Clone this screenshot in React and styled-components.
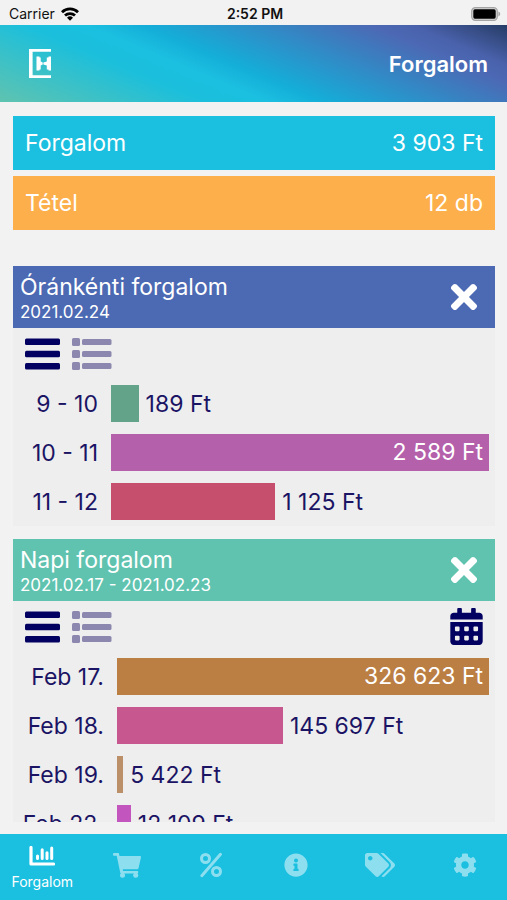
import React from 'react';
import styled, {createGlobalStyle} from 'styled-components';
import {FaTimes, FaCalendarAlt, FaInfoCircle, FaTags, FaCog} from 'react-icons/fa';

const hourly = [
  {label: '9 - 10', value: 189, color: '#62a389'},
  {label: '10 - 11', value: 2589, color: '#b560aa'},
  {label: '11 - 12', value: 1125, color: '#c64f6d'}
];

const daily = [
  {label: 'Feb 17.', value: 326623, color: '#bb7e43'},
  {label: 'Feb 18.', value: 145697, color: '#c6578f'},
  {label: 'Feb 19.', value: 5422, color: '#bb9069'},
  {label: 'Feb 22.', value: 12109, color: '#c255be'}
];

const formatFt = (value) => {
  return String(value).replace(/\B(?=(\d{3})+$)/g, ' ') + ' Ft';
}

const WifiIcon = () => (
  <svg width="18" height="14" viewBox="0 0 18 14" fill="none" stroke="#000" strokeWidth="2.8">
    <path d="M1 5.2a11.4 11.4 0 0 1 16 0" />
    <path d="M4 8.6a7.2 7.2 0 0 1 10 0" />
    <path d="M9 13.8 6 10.8a4.3 4.3 0 0 1 6 0z" fill="#000" stroke="none" />
  </svg>
);

const BatteryIcon = () => (
  <svg width="30" height="14" viewBox="0 0 30 14">
    <rect x="0.7" y="0.7" width="25.6" height="12.6" rx="3.6" fill="#d4d4d4" stroke="#a4a4a4" strokeWidth="1.2" />
    <rect x="2.3" y="2.3" width="22.4" height="9.4" rx="1.6" fill="#000" />
    <path d="M27.4 4.6c2.4.7 2.4 4.1 0 4.8z" fill="#a4a4a4" />
  </svg>
);

const LogoIcon = () => (
  <svg width="22" height="29" viewBox="0 0 22 29" fill="#fff">
    <path d="M0 0h22v2.800H3.600v23.400H22V29H0z" />
    <path d="M7.500 7.500h3v1h1.200v4l2 .9v2.200l-2 .9v4h-1.200v1h-3z" />
    <path d="M22 7.500h-2.500v1H17.800v4l-3.400 1v2l3.400 1v4h1.700v1H22z" />
  </svg>
);

const LinesIcon = () => (
  <svg width="35" height="32" viewBox="0 0 35 32" fill="currentColor">
    <rect y="0.500" width="35" height="6.500" rx="1.500" />
    <rect y="12.700" width="35" height="6.500" rx="1.500" />
    <rect y="25" width="35" height="6.500" rx="1.500" />
  </svg>
);

const ListIcon = () => (
  <svg width="40" height="32" viewBox="0 0 40 32" fill="currentColor">
    <rect width="8" height="8" rx="1.500" />
    <rect y="12" width="8" height="8" rx="1.500" />
    <rect y="24" width="8" height="8" rx="1.500" />
    <rect x="10" y="1" width="29.500" height="6" rx="1.500" />
    <rect x="10" y="13" width="29.500" height="6" rx="1.500" />
    <rect x="10" y="25" width="29.500" height="6" rx="1.500" />
  </svg>
);

const ChartIcon = () => (
  <svg width="26" height="20" viewBox="0 0 26 20" fill="none" stroke="currentColor" strokeLinecap="round">
    <path d="M2 1.500V18H24.500" strokeWidth="3.200" strokeLinejoin="round" />
    <path d="M8.500 10V12.500M13.200 3.800V12.500M18 6.800V12.500M22.700 2V12.500" strokeWidth="3" />
  </svg>
);

const CartIcon = () => (
  <svg width="28" height="25" viewBox="0 0 28 25" fill="currentColor">
    <path d="M1.200 0h4.600l.7 3H27c.8 0 1.200.5 1 1.200l-2.500 11c-.2.700-.6 1-1.200 1H9.700l.4 1.700h14c.8 0 1.300.6 1.100 1.300l-.3 1.200H8.300c-.6 0-1-.4-1.100-1L3.700 2.700H1.200C.3 2.700 0 2.200 0 1.400S.4 0 1.200 0z" />
    <circle cx="9.500" cy="22.300" r="2.500" />
    <circle cx="22.700" cy="22.300" r="2.500" />
  </svg>
);

const PercentIcon = () => (
  <svg width="24" height="26" viewBox="0 0 24 26" fill="none" stroke="currentColor">
    <circle cx="6.500" cy="6.500" r="4" strokeWidth="3" />
    <circle cx="17.500" cy="19.500" r="4" strokeWidth="3" />
    <path d="M21.500 2.300 2.800 23.700" strokeWidth="3" strokeLinecap="round" />
  </svg>
);

const tabs = [
  {name: 'Forgalom', icon: <ChartIcon />},
  {name: 'Kosarak', icon: <CartIcon />},
  {name: 'Kedvezmények', icon: <PercentIcon />},
  {name: 'Információ', icon: <FaInfoCircle size={24} />},
  {name: 'Termékek', icon: <FaTags size={30} />},
  {name: 'Beállítások', icon: <FaCog size={24} />}
];

const Chart = ({title, period, color, rows, labelWidth, calendar}) => {
  const max = Math.max(...rows.map(row => row.value));

  return (
    <Card>
      <CardHeader $color={color}>
        <div>
          <CardTitle>{title}</CardTitle>
          <CardPeriod>{period}</CardPeriod>
        </div>
        <IconButton aria-label="Bezárás"><FaTimes size={38} /></IconButton>
      </CardHeader>
      <Toolbar>
        <IconButton aria-label="Oszlopok"><LinesIcon /></IconButton>
        <IconButton aria-label="Lista" $muted><ListIcon /></IconButton>
        {calendar && (
          <CalendarButton aria-label="Naptár"><FaCalendarAlt size={37} /></CalendarButton>
        )}
      </Toolbar>
      {rows.map(row => (
        <Row key={row.label}>
          <RowLabel $width={labelWidth}>{row.label}</RowLabel>
          <Track>
            <Bar $color={row.color} style={{width: `${row.value / max * 100}%`}}>
              {row.value === max && formatFt(row.value)}
            </Bar>
            {row.value !== max && <Value>{formatFt(row.value)}</Value>}
          </Track>
        </Row>
      ))}
    </Card>
  );
}

export default function App() {
  return (
    <Page>
      <GlobalStyle />
      <StatusBar>
        <Carrier>Carrier <WifiIcon /></Carrier>
        <Time>2:52 PM</Time>
        <Battery><BatteryIcon /></Battery>
      </StatusBar>
      <Header>
        <LogoIcon />
        <HeaderTitle>Forgalom</HeaderTitle>
      </Header>
      <Content>
        <Summary>
          <SummaryRow $color="#1bbfe0"><span>Forgalom</span><span>3 903 Ft</span></SummaryRow>
          <SummaryRow $color="#fcaf4b"><span>Tétel</span><span>12 db</span></SummaryRow>
        </Summary>
        <Chart
          title="Óránkénti forgalom"
          period="2021.02.24"
          color="#4c69b3"
          rows={hourly}
          labelWidth={85}
        />
        <Chart
          title="Napi forgalom"
          period="2021.02.17 - 2021.02.23"
          color="#5fc3b0"
          rows={daily}
          labelWidth={91}
          calendar
        />
      </Content>
      <TabBar>
        {tabs.map((tab, index) => (
          <Tab key={tab.name} $active={index === 0} aria-label={tab.name}>
            {tab.icon}
            {index === 0 && <span>{tab.name}</span>}
          </Tab>
        ))}
      </TabBar>
    </Page>
  );
}

const GlobalStyle = createGlobalStyle`
  * {
    box-sizing: border-box;
  }
  body {
    margin: 0;
    background: #f2f2f2;
    font-family: Inter, "Liberation Sans", sans-serif;
  }
  button {
    font-family: inherit;
    border: 0;
    padding: 0;
    background: none;
    cursor: pointer;
  }
  svg {
    display: block;
    flex: none;
  }
`;

const Page = styled.div`
  display: flex;
  flex-direction: column;
  height: 100vh;
`;

const StatusBar = styled.div`
  display: grid;
  grid-template-columns: 1fr auto 1fr;
  align-items: center;
  height: 25px;
  padding: 2px 6px 0 9px;
  font-size: 14px;
  line-height: 20px;
  color: #111;
`;

const Carrier = styled.span`
  display: flex;
  align-items: center;
  gap: 6px;
`;

const Time = styled.span`
  font-weight: 600;
`;

const Battery = styled.span`
  justify-self: end;
`;

const Header = styled.header`
  display: flex;
  align-items: center;
  justify-content: space-between;
  height: 77px;
  padding: 0 19px 0 29px;
  color: #fff;
  background: linear-gradient(23deg, #5fc3b0 0%, #1bbfdc 30%, #1bbfe0 39%, #14aed8 47%, #4c69b5 80%, #4a62ac 86%, #263c66 100%);
`;

const HeaderTitle = styled.h1`
  margin: 0;
  font-size: 22px;
  line-height: 28px;
  font-weight: 600;
`;

const Content = styled.main`
  flex: 1;
  min-height: 0;
  margin: 14px 12px 12px 13px;
  overflow-y: auto;
  scrollbar-width: none;
`;

const Summary = styled.section`
  display: grid;
  gap: 6px;
  margin-bottom: 36px;
`;

const SummaryRow = styled.div`
  display: flex;
  align-items: center;
  justify-content: space-between;
  height: 54px;
  padding: 0 12px;
  font-size: 23px;
  line-height: 30px;
  color: #fff;
  background: ${props => props.$color};
`;

const Card = styled.section`
  margin-bottom: 13px;
  background: #eeeeee;
`;

const CardHeader = styled.div`
  display: flex;
  align-items: center;
  justify-content: space-between;
  height: 62px;
  padding: 0 12px 0 7px;
  color: #fff;
  background: ${props => props.$color};
`;

const CardTitle = styled.h2`
  margin: 0;
  font-size: 23px;
  line-height: 30px;
  font-weight: 400;
`;

const CardPeriod = styled.div`
  font-size: 17px;
  line-height: 20px;
`;

const Toolbar = styled.div`
  display: flex;
  align-items: center;
  gap: 12px;
  height: 51px;
  padding: 0 10px 0 12px;
`;

const IconButton = styled.button`
  color: ${props => props.$muted ? '#8c87ae' : '#020060'};

  ${CardHeader} & {
    color: #fff;
  }
`;

const CalendarButton = styled(IconButton)`
  margin-left: auto;
`;

const Row = styled.div`
  display: flex;
  align-items: center;
  height: 49px;
  padding-right: 6px;
  font-size: 23px;
  line-height: 30px;
  color: #1b1464;
  white-space: nowrap;
`;

const RowLabel = styled.span`
  width: ${props => props.$width}px;
  margin-right: 13px;
  text-align: right;
`;

const Track = styled.div`
  display: flex;
  flex: 1;
  align-items: center;
`;

const Bar = styled.div`
  flex: none;
  height: 37px;
  padding-right: 6px;
  line-height: 37px;
  text-align: right;
  color: #fff;
  background: ${props => props.$color};
`;

const Value = styled.span`
  margin-left: 7px;
`;

const TabBar = styled.nav`
  display: grid;
  grid-template-columns: repeat(6, 1fr);
  height: 66px;
  background: #1bbfe0;
`;

const Tab = styled.button`
  display: flex;
  flex-direction: column;
  align-items: center;
  justify-content: center;
  gap: 7px;
  padding: ${props => props.$active ? '3px 0 0' : '0 0 4px'};
  font-size: 14px;
  line-height: 18px;
  color: ${props => props.$active ? '#fff' : '#8ddff0'};
`;
